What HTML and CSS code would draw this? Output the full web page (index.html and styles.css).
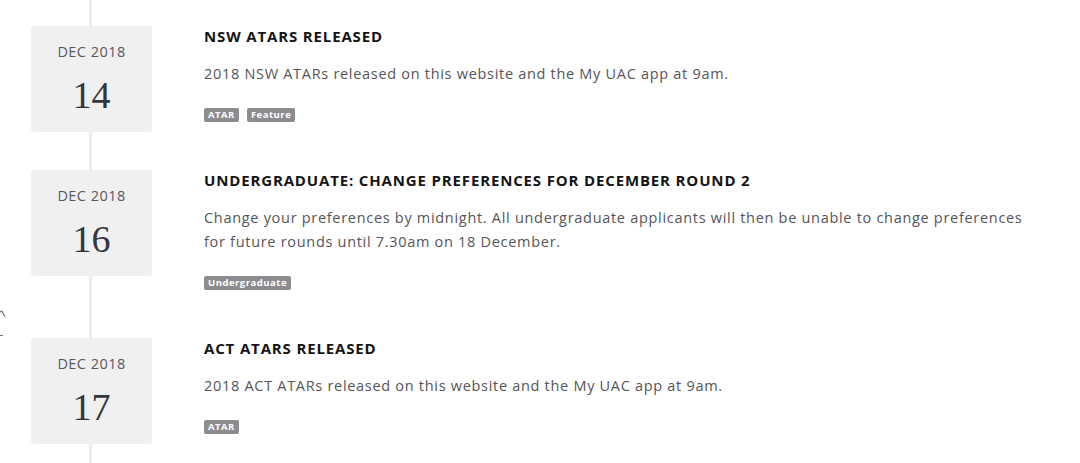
FILE: index.html
```html
<!DOCTYPE html>
<html lang="en">
<head>
<meta charset="utf-8">
<title>Key dates</title>
<link rel="stylesheet" href="styles.css">
</head>
<body>
<div class="page">
  <svg class="edge-mark" width="8" height="30" viewBox="0 0 8 30" aria-hidden="true">
    <path d="M0 4 L2 3 L5 9" fill="none" stroke="#555" stroke-width="1"/>
    <path d="M0 27.5 H3" fill="none" stroke="#777" stroke-width="1"/>
  </svg>
  <ol class="timeline">
    <li class="event">
      <div class="date">
        <span class="month">DEC 2018</span>
        <span class="day">14</span>
      </div>
      <div class="info">
        <h3 class="title">NSW ATARS RELEASED</h3>
        <p class="desc">2018 NSW ATARs released on this website and the My UAC app at 9am.</p>
        <div class="tags"><span class="tag">ATAR</span><span class="tag">Feature</span></div>
      </div>
    </li>
    <li class="event">
      <div class="date">
        <span class="month">DEC 2018</span>
        <span class="day">16</span>
      </div>
      <div class="info">
        <h3 class="title">UNDERGRADUATE: CHANGE PREFERENCES FOR DECEMBER ROUND 2</h3>
        <p class="desc">Change your preferences by midnight. All undergraduate applicants will then be unable to change preferences for future rounds until 7.30am on 18 December.</p>
        <div class="tags"><span class="tag">Undergraduate</span></div>
      </div>
    </li>
    <li class="event">
      <div class="date">
        <span class="month">DEC 2018</span>
        <span class="day">17</span>
      </div>
      <div class="info">
        <h3 class="title">ACT ATARS RELEASED</h3>
        <p class="desc">2018 ACT ATARs released on this website and the My UAC app at 9am.</p>
        <div class="tags"><span class="tag">ATAR</span></div>
      </div>
    </li>
  </ol>
</div>
</body>
</html>
```
FILE: styles.css
```css
* { box-sizing: border-box; }
html, body {
  margin: 0;
  padding: 0;
  background: #fff;
}
body {
  font-family: "Open Sans", "DejaVu Sans", sans-serif;
  color: #555;
  overflow: hidden;
}
.page {
  position: relative;
  height: 463px;
  overflow: hidden;
  background: linear-gradient(#ededee, #ededee) no-repeat 89px 0 / 3px 100%;
}
.edge-mark {
  position: absolute;
  left: 0;
  top: 308px;
}
.timeline {
  list-style: none;
  margin: 0;
  padding: 26px 0 0 31px;
}
.event {
  display: flex;
  align-items: flex-start;
  gap: 52px;
}
.date {
  flex: 0 0 121px;
  height: 106px;
  background: #f0f0f1;
  border-radius: 3px;
  display: flex;
  flex-direction: column;
  align-items: center;
  padding-top: 17px;
}
.month {
  font-size: 14.5px;
  line-height: 18px;
  color: #5a5a5e;
  letter-spacing: 0.45px;
}
.day {
  font-family: "Liberation Serif", "DejaVu Serif", serif;
  font-size: 38px;
  line-height: 44px;
  margin-top: 12px;
  color: #33363b;
}
.info {
  flex: 1;
  padding-bottom: 48px;
  padding-right: 40px;
}
.title {
  margin: 0;
  font-size: 15px;
  line-height: 20px;
  font-weight: 700;
  color: #141414;
  letter-spacing: 0.85px;
}
.desc {
  margin: 16px 0 0;
  font-size: 14.5px;
  line-height: 24px;
  color: #555559;
  letter-spacing: 0.7px;
}
.tags {
  display: flex;
  gap: 8px;
  margin-top: 22px;
}
.tag {
  display: inline-block;
  height: 14px;
  line-height: 14px;
  padding: 0 4px;
  background: #8b8b90;
  color: #fff;
  font-size: 9.5px;
  font-weight: 700;
  border-radius: 2px;
  letter-spacing: 0.5px;
}
```
